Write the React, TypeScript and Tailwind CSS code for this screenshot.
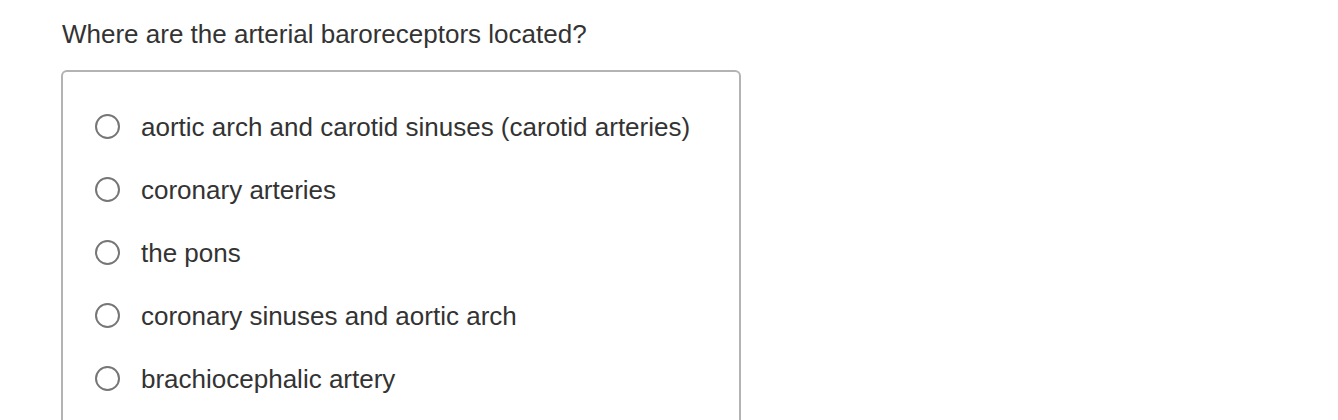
const options = [
  "aortic arch and carotid sinuses (carotid arteries)",
  "coronary arteries",
  "the pons",
  "coronary sinuses and aortic arch",
  "brachiocephalic artery",
];

export default function App() {
  return (
    <div className="min-h-screen bg-white pl-[61px] pt-[17px] font-['Liberation_Sans',Arial,sans-serif] text-[#333]">
      <h1 className="text-[26px] leading-[34px] pl-px">
        Where are the arterial baroreceptors located?
      </h1>

      {/* Answer choices */}
      <div className="mt-[19px] w-[680px] rounded-[6px] border-2 border-[#b3b3b3] pt-[23px] pb-6 pl-[32px]">
        {options.map((o) => (
          <label key={o} className="flex h-[63px] items-center">
            <span className="h-[25px] w-[25px] shrink-0 rounded-full border-2 border-[#767676] bg-white" />
            <span className="ml-[21px] text-[26px] leading-none">{o}</span>
          </label>
        ))}
      </div>
    </div>
  );
}
